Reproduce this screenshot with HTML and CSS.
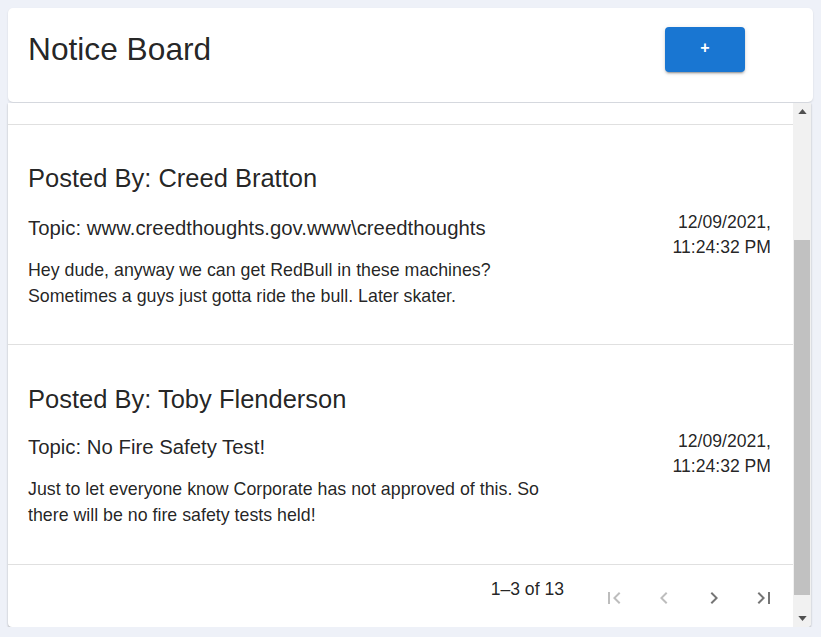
FILE: index.html
```html
<!DOCTYPE html>
<html>
<head>
<meta charset="utf-8">
<link rel="stylesheet" href="styles.css">
</head>
<body>
<div class="page">
  <header class="header-card">
    <h1 class="title">Notice Board</h1>
    <button class="add-btn">+</button>
  </header>
  <section class="panel">
    <div class="panel-content">
      <div class="tail"></div>
      <article class="notice">
        <h2 class="posted">Posted By: Creed Bratton</h2>
        <div class="notice-row">
          <div class="notice-main">
            <h3 class="topic">Topic: www.creedthoughts.gov.www\creedthoughts</h3>
            <p class="body">Hey dude, anyway we can get RedBull in these machines? Sometimes a guys just gotta ride the bull. Later skater.</p>
          </div>
          <div class="date">12/09/2021,<br>11:24:32 PM</div>
        </div>
      </article>
      <article class="notice">
        <h2 class="posted">Posted By: Toby Flenderson</h2>
        <div class="notice-row">
          <div class="notice-main">
            <h3 class="topic">Topic: No Fire Safety Test!</h3>
            <p class="body">Just to let everyone know Corporate has not approved of this. So there will be no fire safety tests held!</p>
          </div>
          <div class="date">12/09/2021,<br>11:24:32 PM</div>
        </div>
      </article>
      <div class="pagination">
        <span class="page-info">1–3 of 13</span>
        <div class="page-buttons">
          <span class="icon-btn disabled"><svg viewBox="0 0 24 24"><path d="M18.41 16.59L13.82 12l4.59-4.59L17 6l-6 6 6 6zM6 6h2v12H6z"/></svg></span>
          <span class="icon-btn disabled"><svg viewBox="0 0 24 24"><path d="M15.41 7.41L14 6l-6 6 6 6 1.41-1.41L10.83 12z"/></svg></span>
          <span class="icon-btn"><svg viewBox="0 0 24 24"><path d="M10 6L8.59 7.41 13.17 12l-4.58 4.59L10 18l6-6z"/></svg></span>
          <span class="icon-btn"><svg viewBox="0 0 24 24"><path d="M5.59 7.41L10.18 12l-4.59 4.59L7 18l6-6-6-6zM16 6h2v12h-2z"/></svg></span>
        </div>
      </div>
    </div>
    <div class="scrollbar">
      <div class="sb-arrow"><svg viewBox="0 0 10 6"><path d="M0 6L5 0l5 6z"/></svg></div>
      <div class="sb-track"><div class="sb-thumb"></div></div>
      <div class="sb-arrow"><svg viewBox="0 0 10 6"><path d="M0 0h10L5 6z"/></svg></div>
    </div>
  </section>
</div>
</body>
</html>
```
FILE: styles.css
```css
* { box-sizing: border-box; }
html, body { margin: 0; padding: 0; }
body {
  background: #eef1f8;
  font-family: "Liberation Sans", Arial, sans-serif;
  color: rgba(0, 0, 0, 0.87);
}
.page {
  padding: 8px 8px 0 8px;
  display: flex;
  flex-direction: column;
}
.header-card {
  background: #fff;
  border-radius: 5px;
  height: 94px;
  display: flex;
  align-items: center;
  justify-content: space-between;
  padding: 0 68px 12px 20px;
  box-shadow: 0 1px 2px rgba(0,0,0,0.12);
}
.title {
  margin: 0;
  font-size: 31.7px;
  font-weight: 400;
  line-height: 40px;
}
.add-btn {
  width: 80px;
  height: 45px;
  border: none;
  border-radius: 4px;
  background: #1976d2;
  color: #fff;
  font-family: "Liberation Sans", Arial, sans-serif;
  font-size: 16px;
  font-weight: 700;
  box-shadow: 0 3px 1px -2px rgba(0,0,0,0.2), 0 2px 2px 0 rgba(0,0,0,0.14), 0 1px 5px 0 rgba(0,0,0,0.12);
  padding: 0 0 2px 0;
}
.panel {
  margin-top: 1px;
  margin-right: 2px;
  background: #fff;
  height: 524px;
  display: flex;
  border-radius: 0 0 4px 4px;
  box-shadow: 0 1px 2px rgba(0,0,0,0.3);
  overflow: hidden;
}
.panel-content {
  flex: 1;
  display: flex;
  flex-direction: column;
  min-width: 0;
}
.tail {
  height: 22px;
  border-bottom: 1px solid #e0e0e0;
}
.notice {
  height: 220px;
  padding: 37px 21px 0 20px;
  border-bottom: 1px solid #e0e0e0;
}
.notice + .notice {
  padding-top: 38px;
}
.posted {
  margin: 0;
  font-size: 25.5px;
  font-weight: 400;
  line-height: 32px;
}
.notice-row {
  margin-top: 16px;
  display: flex;
  justify-content: space-between;
  align-items: flex-start;
}
.notice + .notice .notice-row {
  margin-top: 14px;
}
.notice-main {
  width: 530px;
}
.topic {
  margin: 0;
  font-size: 20.35px;
  font-weight: 400;
  line-height: 36px;
}
.body {
  margin: 11px 0 0 0;
  font-size: 17.8px;
  line-height: 26px;
}
.date {
  font-size: 17.6px;
  line-height: 25px;
  text-align: right;
  margin-top: 0;
  margin-right: 1px;
}
.pagination {
  flex: 1;
  display: flex;
  justify-content: flex-end;
  align-items: flex-start;
  padding-right: 5px;
}
.page-info {
  font-size: 17.6px;
  line-height: 24px;
  margin-top: 12px;
  margin-right: 26px;
}
.page-buttons {
  display: flex;
  gap: 2px;
  margin-top: 9px;
}
.icon-btn {
  width: 48px;
  height: 48px;
  padding: 12px;
  display: flex;
}
.icon-btn svg {
  width: 24px;
  height: 24px;
  fill: rgba(0, 0, 0, 0.54);
}
.icon-btn.disabled svg {
  fill: rgba(0, 0, 0, 0.26);
}
.scrollbar {
  width: 18px;
  background: #f1f1f1;
  display: flex;
  flex-direction: column;
}
.sb-arrow {
  height: 17px;
  display: flex;
  align-items: center;
  justify-content: center;
}
.sb-arrow svg {
  width: 9px;
  height: 5px;
  fill: #505050;
}
.sb-track {
  flex: 1;
  display: flex;
  flex-direction: column;
  padding: 120px 1px 15px 1px;
}
.sb-thumb {
  flex: 1;
  background: #c1c1c1;
}
```
